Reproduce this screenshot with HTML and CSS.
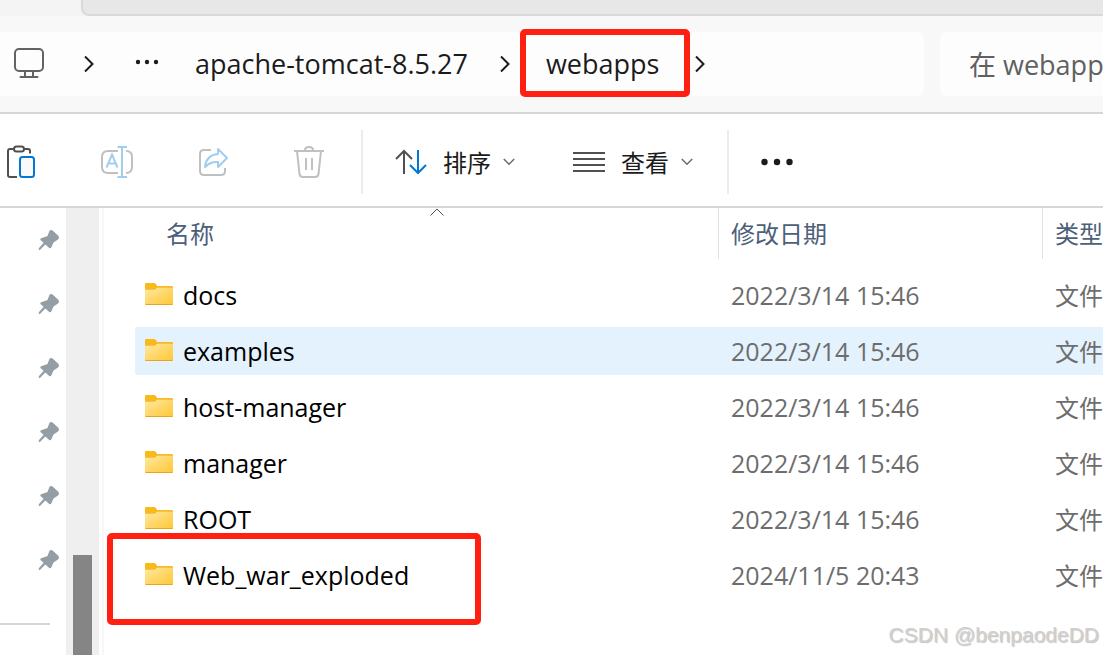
FILE: index.html
```html
<!DOCTYPE html>
<html lang="zh-CN">
<head>
<meta charset="utf-8">
<meta name="viewport" content="width=device-width, initial-scale=1">
<title>webapps</title>
<link rel="stylesheet" href="styles.css">
</head>
<body>
<svg class="defs" width="0" height="0" aria-hidden="true">
  <defs>
    <linearGradient id="folder-fill" x1="0" y1="0" x2="1" y2="1">
      <stop offset="0" stop-color="#ffe9a3"/>
      <stop offset="1" stop-color="#ffc835"/>
    </linearGradient>
    <symbol id="folder" viewBox="0 0 28 22">
      <path d="M0 1Q0 0 1 0H9Q10 0 11 1L12 3H27Q28 3 28 4V8H0Z" fill="#fbb917"/>
      <path d="M0 6H8Q10 6 11 5L12 4H28V21Q28 22 27 22H1Q0 22 0 21Z" fill="#e5a622"/>
      <path d="M0 6.500H9Q10.500 6.500 12 4.500H28V20Q28 21 27 21H1Q0 21 0 20Z" fill="url(#folder-fill)"/>
    </symbol>
    <symbol id="pin" viewBox="0 0 22 22">
      <path d="M11.500 1.800Q13 .2 14.600 1.600L20.500 7Q22 8.800 20 10.500L15.500 13.500L13.300 18.500Q12.300 20 11 18.700L7.300 15.500L2.200 20.700Q.2 21.600 .8 19.300L5.600 13.800L2.500 11Q1.700 9.700 3.200 9.200L9.500 7Z" fill="#949ea4"/>
    </symbol>
    <symbol id="chevron-right" viewBox="0 0 10 18">
      <path d="M1 1.500L8.500 9L1 16.500" fill="none" stroke="#1b1b1b" stroke-width="2"/>
    </symbol>
    <symbol id="chevron-down" viewBox="0 0 12 8">
      <path d="M.8 1L6 6.200L11.200 1" fill="none" stroke="#6c6c6c" stroke-width="1.500"/>
    </symbol>
  </defs>
</svg>
<div class="explorer">
  <div class="tab-strip"><div class="tab-rest"></div></div>
  <header class="nav">
    <nav class="address" aria-label="路径">
      <button class="icon-button this-pc" aria-label="此电脑">
        <svg width="32" height="32" viewBox="0 0 32 32" fill="none" stroke="#636363" stroke-width="2">
          <rect x="2" y="2" width="28" height="22" rx="4"/>
          <path d="M12 24V30M20 24V30M7.500 30H24.500" stroke-linecap="round"/>
        </svg>
      </button>
      <svg class="sep sep-first" width="10" height="18"><use href="#chevron-right"/></svg>
      <button class="icon-button crumb-more" aria-label="更多路径">
        <svg width="24" height="6" viewBox="0 0 24 6" fill="#1b1b1b"><circle cx="3" cy="3" r="2.200"/><circle cx="12" cy="3" r="2.200"/><circle cx="21" cy="3" r="2.200"/></svg>
      </button>
      <a class="crumb crumb-parent" href="#">apache-tomcat-8.5.27</a>
      <svg class="sep" width="10" height="18"><use href="#chevron-right"/></svg>
      <a class="crumb crumb-current" href="#">webapps<span class="mark mark-crumb"></span></a>
      <svg class="sep" width="10" height="18"><use href="#chevron-right"/></svg>
    </nav>
    <input class="search" type="text" aria-label="搜索" placeholder="在 webapp">
  </header>
  <div class="toolbar">
    <div class="tool-icons">
      <button class="icon-button" aria-label="粘贴">
        <svg width="30" height="34" viewBox="0 0 30 34" fill="none" stroke-width="2" stroke="#505050">
          <path d="M8 4H4Q2 4 2 6V30Q2 32 4 32H11M18 4H22Q24 4 24 6V8.500" fill="none"/>
          <rect x="8" y="1.500" width="10" height="5" rx="2.500" fill="#fff"/>
          <rect x="14" y="12" width="14" height="20" rx="2.500" stroke="#0078d4" fill="#fafafa"/>
        </svg>
      </button>
      <button class="icon-button" aria-label="重命名" disabled>
        <svg width="34" height="34" viewBox="0 0 34 34" fill="none" stroke="#c0c0c0" stroke-width="2">
          <path d="M18 6H8Q2 6 2 12V22Q2 28 8 28H18M26 6Q32 6 32 12V22Q32 28 26 28"/>
          <path d="M17.500 2H27M17.500 32H27M22 2V32M6.500 22.500L12 9.500L17.500 22.500M8.500 18.500H15.500" stroke="#a0cef1"/>
        </svg>
      </button>
      <button class="icon-button" aria-label="共享" disabled>
        <svg width="32" height="32" viewBox="0 0 32 32" fill="none" stroke="#c0c0c0" stroke-width="2" stroke-linejoin="round">
          <path d="M13 4H6Q2 4 2 8V25Q2 29 6 29H23Q27 29 27 25V22"/>
          <path d="M20 3L29 12L20 21V16Q12 15.500 7 21Q8 9 20 8Z" stroke="#a0cef1"/>
        </svg>
      </button>
      <button class="icon-button" aria-label="删除" disabled>
        <svg width="30" height="34" viewBox="0 0 30 34" fill="none" stroke="#c0c0c0" stroke-width="2">
          <path d="M0 6H30M10.500 6Q11 2 15 2T19.500 6M3 6L5.500 29Q6 32 9 32H21Q24 32 24.500 29L27 6M12 13V25M18 13V25"/>
        </svg>
      </button>
    </div>
    <div class="tool-menus">
      <button class="menu-button">
        <svg width="32" height="26" viewBox="0 0 32 26" fill="none" stroke-width="2">
          <path d="M9 25V2M1 10L9 2L17 10" stroke="#505050"/>
          <path d="M23 1V24M15 16L23 24L31 16" stroke="#0078d4"/>
        </svg>
        <span class="menu-label">排序</span>
        <svg class="caret" width="12" height="8"><use href="#chevron-down"/></svg>
      </button>
      <button class="menu-button">
        <svg width="32" height="26" viewBox="0 0 32 26" stroke="#505050" stroke-width="2"><path d="M0 4H32M0 10H32M0 16H32M0 22H32"/></svg>
        <span class="menu-label">查看</span>
        <svg class="caret" width="12" height="8"><use href="#chevron-down"/></svg>
      </button>
    </div>
    <button class="icon-button tool-more" aria-label="更多">
      <svg width="32" height="8" viewBox="0 0 32 8" fill="#1b1b1b"><circle cx="3.500" cy="4" r="3.200"/><circle cx="16" cy="4" r="3.200"/><circle cx="28.500" cy="4" r="3.200"/></svg>
    </button>
  </div>
  <div class="content">
    <aside class="sidebar">
      <ul class="pins">
        <li><svg width="22" height="22"><use href="#pin"/></svg></li>
        <li><svg width="22" height="22"><use href="#pin"/></svg></li>
        <li><svg width="22" height="22"><use href="#pin"/></svg></li>
        <li><svg width="22" height="22"><use href="#pin"/></svg></li>
        <li><svg width="22" height="22"><use href="#pin"/></svg></li>
        <li><svg width="22" height="22"><use href="#pin"/></svg></li>
      </ul>
      <hr class="side-rule">
    </aside>
    <div class="scroll-track"><div class="scroll-thumb"></div></div>
    <main class="files">
      <table class="file-table">
        <thead>
          <tr>
            <th class="col-name"><div class="head">名称<svg class="sort-mark" width="14" height="8" viewBox="0 0 14 8" fill="none" stroke="#505050"><path d="M.5 7.500L7 1L13.500 7.500"/></svg></div></th>
            <th class="col-date"><div class="head">修改日期</div></th>
            <th class="col-type"><div class="head">类型</div></th>
          </tr>
        </thead>
        <tbody>
          <tr><td><div class="name"><svg width="28" height="22"><use href="#folder"/></svg>docs</div></td><td>2022/3/14 15:46</td><td class="type">文件</td></tr>
          <tr class="hovered"><td><div class="name"><svg width="28" height="22"><use href="#folder"/></svg>examples</div></td><td>2022/3/14 15:46</td><td class="type">文件</td></tr>
          <tr><td><div class="name"><svg width="28" height="22"><use href="#folder"/></svg>host-manager</div></td><td>2022/3/14 15:46</td><td class="type">文件</td></tr>
          <tr><td><div class="name"><svg width="28" height="22"><use href="#folder"/></svg>manager</div></td><td>2022/3/14 15:46</td><td class="type">文件</td></tr>
          <tr><td><div class="name"><svg width="28" height="22"><use href="#folder"/></svg>ROOT</div></td><td>2022/3/14 15:46</td><td class="type">文件</td></tr>
          <tr><td><div class="name"><svg width="28" height="22"><use href="#folder"/></svg>Web_war_exploded<span class="mark mark-row"></span></div></td><td>2024/11/5 20:43</td><td class="type">文件</td></tr>
        </tbody>
      </table>
    </main>
  </div>
  <div class="watermark">CSDN @benpaodeDD</div>
</div>
</body>
</html>
```
FILE: styles.css
```css
* { box-sizing: border-box; }

body {
  margin: 0;
  font-family: "Open Sans", "Noto Sans CJK SC", sans-serif;
  font-size: 24px;
  color: #1b1b1b;
  background: #fff;
}

.defs { position: absolute; }

svg { display: block; flex: none; }

button {
  font: inherit;
  color: inherit;
  background: none;
  border: 0;
  padding: 0;
}

.explorer {
  position: relative;
  display: flex;
  flex-direction: column;
  height: 100vh;
  overflow: hidden;
}

.tab-strip {
  flex: none;
  height: 16px;
  padding-left: 81px;
  background: linear-gradient(to right, #f4f4f4 88px, #f8f8f8 88px);
}

.tab-rest {
  height: 16px;
  background: #e7e7e7;
  border: solid #d9d9d9;
  border-width: 0 0 2px 2px;
  border-bottom-left-radius: 8px;
}

.nav {
  flex: none;
  display: flex;
  gap: 16px;
  padding: 16px 0;
  background: #f8f8f8;
  border-bottom: 2px solid #d6d6d6;
}

.address {
  flex: 1;
  min-width: 0;
  height: 64px;
  display: flex;
  align-items: center;
  padding-left: 13px;
  background: #fdfdfd;
  border-radius: 0 8px 8px 0;
}

.this-pc { margin-bottom: 2px; }
.sep-first { margin-left: 39px; }
.crumb-more { margin: 0 36px 4px 41px; }

.crumb {
  position: relative;
  font-size: 27px;
  line-height: 36px;
  color: #1b1b1b;
  text-decoration: none;
  white-space: nowrap;
}

.crumb-parent { margin-right: 32px; }
.crumb-current { margin: 0 36px; }

.mark {
  position: absolute;
  border: 6px solid #ff2012;
  border-radius: 5px;
  pointer-events: none;
}

.mark-crumb { inset: -17px -31px -15px -26px; }
.mark-row { left: -38px; top: -26px; width: 374px; height: 92px; }

.search {
  width: 163px;
  height: 64px;
  padding: 0 0 0 29px;
  font: inherit;
  font-size: 27px;
  background: #fdfdfd;
  border: 0;
  border-radius: 8px 0 0 8px;
}

.search::placeholder { color: #606060; opacity: 1; }

.toolbar {
  flex: none;
  display: flex;
  align-items: center;
  height: 94px;
  padding-top: 4px;
  border-bottom: 2px solid #d6d6d6;
}

.tool-icons, .tool-menus {
  display: flex;
  align-items: center;
  height: 64px;
  border-right: 2px solid #ececec;
}

.tool-icons { gap: 64px; padding: 0 37px 0 6px; }
.tool-menus { gap: 58px; padding: 0 34px 0 32px; }
.menu-button { display: flex; align-items: center; gap: 16px; line-height: 32px; }
.menu-label { padding-top: 2px; }
.caret { margin-left: -4px; }
.tool-more { margin-left: 32px; }

.content { flex: 1; min-height: 0; display: flex; }

.sidebar { width: 66px; flex: none; }

.pins {
  margin: 0;
  padding: 0 6px 0 0;
  list-style: none;
}

.pins li {
  display: flex;
  align-items: center;
  justify-content: flex-end;
  height: 64px;
}

.side-rule {
  width: 50px;
  height: 2px;
  margin: 31px 0 0;
  border: 0;
  background: #d6d6d6;
}

.scroll-track {
  flex: none;
  display: flex;
  align-items: flex-end;
  width: 33px;
  padding: 0 7px;
  background: #efefef;
}

.scroll-thumb { width: 100%; height: 100px; background: #858585; }

.files {
  flex: 1;
  min-width: 0;
  margin-left: 3px;
  padding-left: 31px;
  border-left: 2px solid #f7f7f7;
  overflow: hidden;
}

.file-table {
  width: 100%;
  margin-top: -8px;
  table-layout: fixed;
  border-collapse: separate;
  border-spacing: 0 8px;
}

.file-table th, .file-table td {
  padding: 0;
  font-weight: normal;
  text-align: left;
  white-space: nowrap;
}

.file-table th { height: 55px; vertical-align: top; color: #4c607a; }
.file-table td {
  height: 48px;
  padding-left: 13px;
  font-size: 25px;
  line-height: 32px;
  color: #6d6d6d;
}
.file-table .type { padding-top: 2px; font-size: 24px; }
.col-date { width: 324px; }
.col-type { width: 61px; }

.head {
  position: relative;
  height: 51px;
  padding-left: 12px;
  line-height: 52px;
  border-left: 1px solid #e2e2e2;
}

.col-name .head { padding-left: 31px; border-left: 0; }
.sort-mark { position: absolute; top: 0; left: calc(50% + 3px); }

.file-table td:first-child { padding-left: 10px; border-radius: 3px 0 0 3px; }

.name {
  position: relative;
  display: flex;
  align-items: center;
  gap: 10px;
  color: #000;
}

.name svg { margin-bottom: 2px; }

.hovered td { background: #e4f2fd; }

.watermark {
  position: absolute;
  right: 4px;
  bottom: 6px;
  font-family: "Liberation Sans", sans-serif;
  font-size: 21px;
  line-height: 28px;
  color: #d0d0d0;
  text-shadow: 1px 1px 1px #c4c4c4;
}
```
